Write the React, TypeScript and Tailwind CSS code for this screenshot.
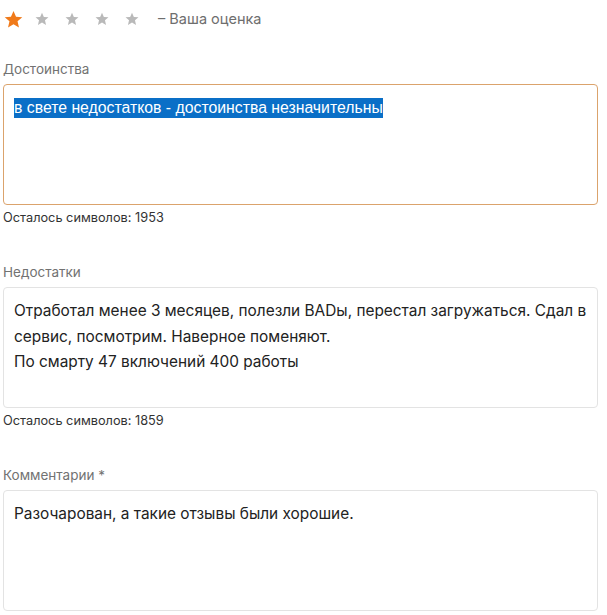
import React from 'react';

const Star = ({ size, color }: { size: number; color: string }) => (
	<svg width={size} height={size} viewBox="0 0 24 24" fill={color}>
		<path d="M12 1.2l3.2 7.2 7.9.7-6 5.2 1.8 7.8L12 18l-6.9 4.1 1.8-7.8-6-5.2 7.9-.7z" />
	</svg>
);

const fields = [
	{
		label: 'Достоинства',
		active: true,
		text: ['в свете недостатков - достоинства незначительны'],
		left: 1953,
	},
	{
		label: 'Недостатки',
		active: false,
		text: [
			'Отработал менее 3 месяцев, полезли BADы, перестал загружаться. Сдал в',
			'сервис, посмотрим. Наверное поменяют.',
			'По смарту 47 включений 400 работы',
		],
		left: 1859,
	},
	{
		label: 'Комментарии *',
		active: false,
		text: ['Разочарован, а такие отзывы были хорошие.'],
		left: undefined,
	},
];

export default function App() {
	return (
		<div className="w-[607px] h-[615px] overflow-hidden bg-white pl-[3px] font-['Inter',sans-serif]">
			{/* rating */}
			<div className="flex items-center h-[38px]">
				<div className="ml-[1px] flex items-center">
					<Star size={19} color="#f07a1a" />
				</div>
				<div className="ml-[12px] flex items-center gap-[16px]">
					<Star size={14} color="#b9b9b9" />
					<Star size={14} color="#b9b9b9" />
					<Star size={14} color="#b9b9b9" />
					<Star size={14} color="#b9b9b9" />
				</div>
				<span className="ml-[19px] text-[14.5px] text-[#6e6e6e]">– Ваша оценка</span>
			</div>

			<div className="mt-[21px] flex flex-col">
				{fields.map((f, idx) => (
					<div key={idx} className={idx > 0 ? 'mt-[35px]' : ''}>
						<p className="text-[13.5px] leading-[20px] text-[#727272]">{f.label}</p>
						<div
							className={`mt-[5px] w-[595px] h-[121px] rounded-[4px] border px-[10px] pt-[10px] text-[15.4px] leading-[25.5px] text-[#222] ${
								f.active ? 'border-[#dba36c]' : 'border-[#e3e3e3]'
							}`}
						>
							{f.active ? (
								<span className="inline-block h-[20px] leading-[20px] bg-[#0a6fc7] text-white font-['Liberation_Sans',sans-serif] text-[15.8px]">
									{f.text[0]}
								</span>
							) : (
								f.text.map((line, i) => <div key={i}>{line}</div>)
							)}
						</div>
						{f.left !== undefined && (
							<p className="mt-[4px] text-[12.75px] leading-[18px] text-[#333]">
								Осталось символов: {f.left}
							</p>
						)}
					</div>
				))}
			</div>
		</div>
	);
}
